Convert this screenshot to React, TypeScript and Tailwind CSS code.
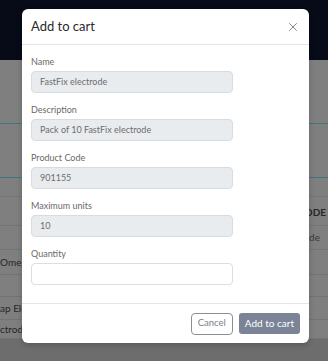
import { X } from "lucide-react";

const fields = [
  { label: "Name", value: "FastFix electrode" },
  { label: "Description", value: "Pack of 10 FastFix electrode" },
  { label: "Product Code", value: "901155" },
  { label: "Maximum units", value: "10" },
];

function PageBehind() {
  return (
    <div className="flex flex-col h-[361px] w-[328px] overflow-hidden bg-[#7f7f7f]">
      {/* Navbar */}
      <div className="h-[60px] shrink-0 bg-[#070b18]" />

      {/* Page content dimmed by backdrop */}
      <div className="h-[64px] shrink-0 border-b border-[#3f7783]" />
      <div className="h-[54px] shrink-0 border-b border-[#3f7783]" />
      <div className="h-[19px] shrink-0 border-b border-[#757575]" />

      {/* Table */}
      <div className="flex flex-col text-[10px] text-[#262626]">
        <div className="h-[29px] flex items-center justify-end pt-[2px] pr-[2px] font-bold border-b border-[#737373]">
          <span>CODE</span>
        </div>
        <div className="h-[24px] flex items-center justify-end pr-[8px] border-b border-[#737373] text-[#3a3a3a]">
          <span>Code</span>
        </div>
        <div className="h-[25px] flex items-center border-b border-[#737373]">
          <span>Omega</span>
        </div>
        <div className="h-[22px] border-b border-[#737373]" />
        <div className="h-[23px] flex items-center border-b border-[#737373]">
          <span>ap Electrode</span>
        </div>
        <div className="h-[19px] flex items-center border-b border-[#737373]">
          <span>ctrode</span>
        </div>
      </div>
      <div className="flex-1 bg-[#6d6d6d]" />
    </div>
  );
}

export default function App() {
  return (
    <div className="relative w-[328px] h-[361px] overflow-hidden font-['Lato',sans-serif]">
      <PageBehind />

      {/* Modal */}
      <div className="absolute left-[22px] top-[9px] w-[287px] h-[334px] bg-white rounded-[6px] flex flex-col shadow-[0_2px_6px_rgba(0,0,0,0.2)]">
        {/* Header */}
        <div className="h-[36px] flex items-center justify-between pl-[9px] pr-[9px] border-b border-[#e6e6e6]">
          <span className="text-[13px] text-[#2a2a2a] leading-none">Add to cart</span>
          <X className="w-[14px] h-[14px] text-[#6b6b6b]" strokeWidth={1.4} />
        </div>

        {/* Body */}
        <div className="flex flex-col gap-[10px] px-[9px] pt-[10px] pb-[18px] border-b border-[#e6e6e6]">
          {fields.map((f) => (
            <div key={f.label} className="flex flex-col gap-[3px]">
              <span className="text-[9px] leading-[13px] text-[#6a6a6a]">{f.label}</span>
              <div className="w-[202px] h-[22px] rounded-[4px] bg-[#e9ecef] border border-[#d8dce0] flex items-center pl-[8px] text-[9px] text-[#6c6c6c]">
                {f.value}
              </div>
            </div>
          ))}
          <div className="flex flex-col gap-[3px]">
            <span className="text-[9px] leading-[13px] text-[#6a6a6a]">Quantity</span>
            <div className="w-[202px] h-[22px] rounded-[4px] bg-white border border-[#dadde1]" />
          </div>
        </div>

        {/* Footer */}
        <div className="flex-1 flex items-center justify-end gap-[6px] pr-[9px]">
          <button className="h-[22px] px-[6px] rounded-[4px] border border-[#8a8f96] bg-white text-[9.5px] text-[#7a7f86]">
            Cancel
          </button>
          <button className="h-[21px] px-[6px] rounded-[3px] bg-[#7b8396] text-[10px] text-white">
            Add to cart
          </button>
        </div>
      </div>
    </div>
  );
}
